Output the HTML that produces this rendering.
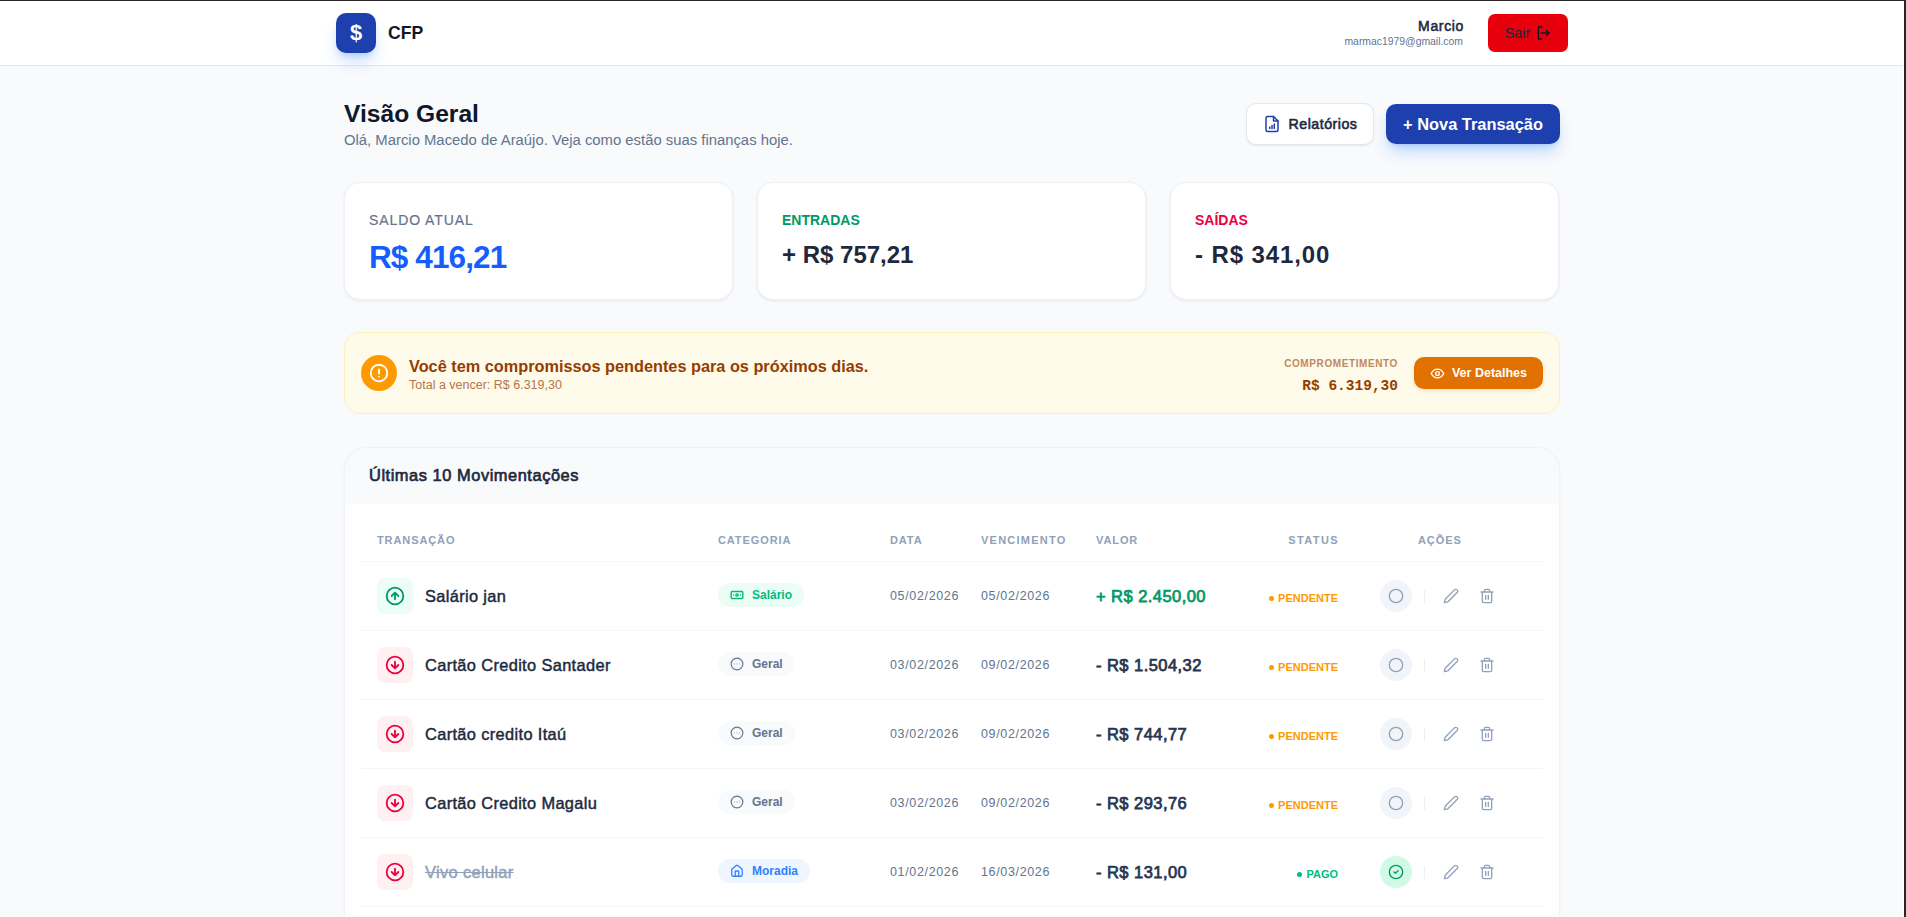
<!DOCTYPE html>
<html lang="pt-BR">
<head>
<meta charset="utf-8">
<title>CFP</title>
<style>
*{box-sizing:border-box;margin:0;padding:0}
html,body{width:1906px;height:917px;overflow:hidden}
body{font-family:"Liberation Sans",sans-serif;background:#f8fafc;position:relative;color:#0f172a}
.abs{position:absolute}
#topline{left:0;top:0;width:1906px;height:1px;background:#2b2424;z-index:10}
#rightline{left:1904px;top:0;width:2px;height:917px;background:#262626;z-index:10}
#whitecol{left:1903px;top:0;width:1px;height:917px;background:#fff;z-index:9}
header{position:absolute;left:0;top:0;width:1906px;height:66px;background:#fff;border-bottom:1px solid #e2e8f0}
.logo{left:336px;top:13px;width:40px;height:40px;border-radius:10px;background:#1e40af;box-shadow:0 10px 15px -3px rgba(48,128,255,.3),0 4px 6px -4px rgba(48,128,255,.3);color:#fff;font-weight:700;font-size:22px;text-align:center;line-height:40px}
.brand{left:388px;top:23px;font-size:17.6px;font-weight:700;color:#0f172a}
.uname{right:442px;top:18px;font-size:14px;font-weight:400;letter-spacing:.65px;-webkit-text-stroke:.55px currentColor;color:#1d293d;text-align:right}
.uemail{right:443px;top:36px;font-size:10.4px;color:#62748e;text-align:right}
.sair{left:1488px;top:14px;width:80px;height:38px;border-radius:7px;background:#e7000b;color:#1d293d;font-size:14.3px;display:flex;align-items:center;justify-content:center;gap:5px;padding-left:0px;-webkit-text-stroke:.2px currentColor}
h1{position:absolute;left:344px;top:100px;font-size:24.6px;font-weight:700;color:#0f172a}
.sub{left:344px;top:132px;font-size:14.85px;color:#62748e}
.btn-rel{left:1246px;top:103px;width:128px;height:42px;padding-left:0px;padding-bottom:1px;border-radius:10px;background:#fff;border:1px solid #e2e8f0;box-shadow:0 1px 2px rgba(0,0,0,.08);display:flex;align-items:center;justify-content:center;gap:8px;font-size:14.2px;font-weight:400;letter-spacing:.5px;-webkit-text-stroke:.6px currentColor;color:#1d293d}
.btn-nova{left:1386px;top:104px;width:174px;height:40px;border-radius:10px;background:#1e40af;box-shadow:0 10px 15px -3px rgba(48,128,255,.3),0 4px 6px -4px rgba(48,128,255,.3);color:#fff;font-size:16.4px;padding-top:1px;font-weight:700;display:flex;align-items:center;justify-content:center}
.card{top:182px;width:389px;height:118px;background:#fff;border-radius:16px;border:1px solid #eef2f6;box-shadow:0 1px 3px rgba(15,23,42,.08)}
.card .lbl{position:absolute;left:24px;top:29px;font-size:14px;letter-spacing:.9px}
.card .val{position:absolute;left:24px;top:58px;font-size:24px;font-weight:700;color:#1d293d}
.card .val.big{top:56px;font-size:31.5px;letter-spacing:-.9px}
.alert{left:344px;top:332px;width:1216px;height:82px;background:#fefbea;border:1px solid #fdf0b8;border-radius:16px}

.al-icon{left:361px;top:355px;width:36px;height:36px;border-radius:50%;background:#fe9a00;display:flex;align-items:center;justify-content:center}
.al-title{left:409px;top:357px;font-size:16.3px;font-weight:700;color:#973c00;white-space:nowrap}
.al-sub{left:409px;top:378px;font-size:12.5px;color:#b67546;white-space:nowrap}
.al-lbl{right:508px;top:358px;font-size:10px;font-weight:700;letter-spacing:.6px;color:#c1885e;text-align:right}
.al-val{right:508px;top:378px;font-family:"Liberation Mono",monospace;font-size:14.5px;font-weight:700;color:#973c00;text-align:right}
.al-btn{left:1414px;top:357px;width:129px;height:32px;border-radius:10px;background:#e17100;box-shadow:0 2px 4px rgba(180,83,9,.15);color:#fff;font-size:12.5px;font-weight:700;display:flex;align-items:center;justify-content:center;gap:7px;padding-left:0px}
.tcard{left:344px;top:447px;width:1216px;height:520px;background:#fff;border:1px solid #eef2f6;border-radius:24px;overflow:hidden;box-shadow:0 1px 3px rgba(15,23,42,.05)}
.thead{position:absolute;left:0;top:0;width:100%;height:56px;background:#f9fafc}
.ttitle{position:absolute;left:24px;top:18px;font-size:16.4px;font-weight:400;letter-spacing:.55px;-webkit-text-stroke:.65px currentColor;color:#1d293d}
.th{position:absolute;top:86px;font-size:11px;font-weight:700;letter-spacing:.9px;color:#90a1b9}
.row{position:absolute;left:16px;width:1182px;height:69px;border-top:1px solid #f3f6f9}
.ibox{position:absolute;left:16px;top:16px;width:36px;height:36px;border-radius:8px;display:flex;align-items:center;justify-content:center}
.ibox.up{background:#ecfdf5}
.ibox.down{background:#fff1f2}
.nm{position:absolute;left:64px;top:25px;font-size:16.4px;font-weight:400;letter-spacing:.35px;-webkit-text-stroke:.45px currentColor;color:#1d293d;white-space:nowrap}
.pill{position:absolute;left:357px;top:21px;height:24px;border-radius:12px;display:flex;align-items:center;padding:0 12px 0 12px;gap:8px;font-size:12px;font-weight:700;white-space:nowrap}
.dt{position:absolute;top:27px;font-size:12.5px;letter-spacing:.65px;color:#62748e}
.vl{position:absolute;left:735px;top:25px;font-size:16.5px;font-weight:400;letter-spacing:.45px;-webkit-text-stroke:.75px currentColor;white-space:nowrap}
.st{position:absolute;right:205px;top:30px;font-size:11px;font-weight:700;white-space:nowrap;text-align:right}
.st i{display:inline-block;width:5px;height:5px;border-radius:50%;margin-right:4px;vertical-align:middle;position:relative;top:-1px}
.chk{position:absolute;left:1019px;top:18px;width:32px;height:32px;border-radius:50%;display:flex;align-items:center;justify-content:center}
.sep{position:absolute;left:1063px;top:28px;width:1px;height:13px;background:#eceff4}
.ed{position:absolute;left:1082px;top:26px}
.tr{position:absolute;left:1118px;top:26px}
</style>
</head>
<body>
<div id="topline" class="abs"></div>
<div id="whitecol" class="abs"></div>
<div id="rightline" class="abs"></div>
<header>
  <div class="abs logo">$</div>
  <div class="abs brand">CFP</div>
  <div class="abs uname">Marcio</div>
  <div class="abs uemail">marmac1979@gmail.com</div>
  <div class="abs sair">Sair <svg width="16" height="16" viewBox="0 0 24 24" fill="none" stroke="#0f172a" stroke-width="2.2" stroke-linecap="round" stroke-linejoin="round"><path d="M10 3H6a1 1 0 0 0-1 1v16a1 1 0 0 0 1 1h4"/><path d="M9 12h12"/><path d="M17 8l4 4-4 4"/></svg></div>
</header>

<h1>Visão Geral</h1>
<div class="abs sub">Olá, Marcio Macedo de Araújo. Veja como estão suas finanças hoje.</div>
<div class="abs btn-rel"><svg width="18" height="18" viewBox="0 0 24 24" fill="none" stroke="#1e40af" stroke-width="2" stroke-linecap="round" stroke-linejoin="round"><path d="M14 2H6a2 2 0 0 0-2 2v16a2 2 0 0 0 2 2h12a2 2 0 0 0 2-2V8z"/><path d="M14 2v6h6"/><path d="M9 18v-2M12 18v-4M15 18v-6"/></svg>Relatórios</div>
<div class="abs btn-nova">+ Nova Transação</div>

<div class="abs card" style="left:344px"><div class="lbl" style="color:#62748e;-webkit-text-stroke:.2px currentColor">SALDO ATUAL</div><div class="val big" style="color:#155dfc">R$ 416,21</div></div>
<div class="abs card" style="left:757px"><div class="lbl" style="color:#009966;font-weight:700;letter-spacing:0">ENTRADAS</div><div class="val">+ R$ 757,21</div></div>
<div class="abs card" style="left:1170px"><div class="lbl" style="color:#ec003f;font-weight:700;letter-spacing:0">SAÍDAS</div><div class="val" style="letter-spacing:.9px">- R$ 341,00</div></div>

<div class="abs alert"></div>
<div class="abs al-icon"><svg width="22" height="22" viewBox="0 0 24 24" fill="none" stroke="#fff" stroke-width="2" stroke-linecap="round"><circle cx="12" cy="12" r="9"/><path d="M12 8v4.5M12 16h.01"/></svg></div>
<div class="abs al-title">Você tem compromissos pendentes para os próximos dias.</div>
<div class="abs al-sub">Total a vencer: R$ 6.319,30</div>
<div class="abs al-lbl">COMPROMETIMENTO</div>
<div class="abs al-val">R$ 6.319,30</div>
<div class="abs al-btn"><svg width="15" height="15" viewBox="0 0 24 24" fill="none" stroke="#fff" stroke-width="2.2" stroke-linecap="round" stroke-linejoin="round"><path d="M2 12s3.6-7 10-7 10 7 10 7-3.6 7-10 7S2 12 2 12z"/><circle cx="12" cy="12" r="3"/></svg>Ver Detalhes</div>

<div class="abs tcard">
<div class="thead"><div class="ttitle">Últimas 10 Movimentações</div></div>
<div class="th" style="left:32px">TRANSAÇÃO</div>
<div class="th" style="left:373px">CATEGORIA</div>
<div class="th" style="left:545px">DATA</div>
<div class="th" style="left:636px;letter-spacing:1.25px">VENCIMENTO</div>
<div class="th" style="left:751px">VALOR</div>
<div class="th" style="right:220px;letter-spacing:1.4px">STATUS</div>
<div class="th" style="left:1073px">AÇÕES</div>
<div class="row" style="top:113px"><div class="ibox up"><svg width="20" height="20" viewBox="0 0 24 24" fill="none" stroke="#009966" stroke-width="2.2" stroke-linecap="round" stroke-linejoin="round"><circle cx="12" cy="12" r="10"/><path d="M16 12l-4-4-4 4M12 16V8"/></svg></div><div class="nm" style="">Salário jan</div><div class="pill" style="background:#ecfdf5;color:#00bc7d"><svg width="14" height="14" viewBox="0 0 24 24" fill="none" stroke="#00bc7d" stroke-width="2.4" stroke-linecap="round" stroke-linejoin="round"><rect x="2" y="6" width="20" height="12" rx="2"/><circle cx="12" cy="12" r="2"/><path d="M6 12h.01M18 12h.01"/></svg>Salário</div><div class="dt" style="left:529px">05/02/2026</div><div class="dt" style="left:620px">05/02/2026</div><div class="vl" style="color:#009966">+ R$ 2.450,00</div><div class="st" style="color:#fe9a00"><i style="background:#fe9a00"></i>PENDENTE</div><div class="chk" style="background:#f1f5f9"><svg width="16" height="16" viewBox="0 0 24 24" fill="none" stroke="#90a1b9" stroke-width="2"><circle cx="12" cy="12" r="10"/></svg></div><div class="sep"></div><div class="ed"><svg width="16" height="16" viewBox="0 0 24 24" fill="none" stroke="#90a1b9" stroke-width="2" stroke-linecap="round" stroke-linejoin="round"><path d="M21.174 6.812a1 1 0 0 0-3.986-3.987L3.842 16.174a2 2 0 0 0-.5.83l-1.321 4.352a.5.5 0 0 0 .623.622l4.353-1.32a2 2 0 0 0 .83-.497z"/></svg></div><div class="tr"><svg width="16" height="16" viewBox="0 0 24 24" fill="none" stroke="#90a1b9" stroke-width="2" stroke-linecap="round" stroke-linejoin="round"><path d="M3 6h18M19 6v14a2 2 0 0 1-2 2H7a2 2 0 0 1-2-2V6M8 6V4a2 2 0 0 1 2-2h4a2 2 0 0 1 2 2v2M10 11v6M14 11v6"/></svg></div></div>
<div class="row" style="top:182px"><div class="ibox down"><svg width="20" height="20" viewBox="0 0 24 24" fill="none" stroke="#ec003f" stroke-width="2.2" stroke-linecap="round" stroke-linejoin="round"><circle cx="12" cy="12" r="10"/><path d="M8 12l4 4 4-4M12 8v8"/></svg></div><div class="nm" style="">Cartão Credito Santader</div><div class="pill" style="background:#f8fafc;color:#62748e"><svg width="14" height="14" viewBox="0 0 24 24" fill="none" stroke="#62748e" stroke-width="2" stroke-linecap="round" stroke-linejoin="round"><circle cx="12" cy="12" r="10"/><path d="M16.5 12h.01M12 12h.01M7.5 12h.01" stroke="#b8c4d4" stroke-width="2.6"/></svg>Geral</div><div class="dt" style="left:529px">03/02/2026</div><div class="dt" style="left:620px">09/02/2026</div><div class="vl" style="color:#293650">- R$ 1.504,32</div><div class="st" style="color:#fe9a00"><i style="background:#fe9a00"></i>PENDENTE</div><div class="chk" style="background:#f1f5f9"><svg width="16" height="16" viewBox="0 0 24 24" fill="none" stroke="#90a1b9" stroke-width="2"><circle cx="12" cy="12" r="10"/></svg></div><div class="sep"></div><div class="ed"><svg width="16" height="16" viewBox="0 0 24 24" fill="none" stroke="#90a1b9" stroke-width="2" stroke-linecap="round" stroke-linejoin="round"><path d="M21.174 6.812a1 1 0 0 0-3.986-3.987L3.842 16.174a2 2 0 0 0-.5.83l-1.321 4.352a.5.5 0 0 0 .623.622l4.353-1.32a2 2 0 0 0 .83-.497z"/></svg></div><div class="tr"><svg width="16" height="16" viewBox="0 0 24 24" fill="none" stroke="#90a1b9" stroke-width="2" stroke-linecap="round" stroke-linejoin="round"><path d="M3 6h18M19 6v14a2 2 0 0 1-2 2H7a2 2 0 0 1-2-2V6M8 6V4a2 2 0 0 1 2-2h4a2 2 0 0 1 2 2v2M10 11v6M14 11v6"/></svg></div></div>
<div class="row" style="top:251px"><div class="ibox down"><svg width="20" height="20" viewBox="0 0 24 24" fill="none" stroke="#ec003f" stroke-width="2.2" stroke-linecap="round" stroke-linejoin="round"><circle cx="12" cy="12" r="10"/><path d="M8 12l4 4 4-4M12 8v8"/></svg></div><div class="nm" style="">Cartão credito Itaú</div><div class="pill" style="background:#f8fafc;color:#62748e"><svg width="14" height="14" viewBox="0 0 24 24" fill="none" stroke="#62748e" stroke-width="2" stroke-linecap="round" stroke-linejoin="round"><circle cx="12" cy="12" r="10"/><path d="M16.5 12h.01M12 12h.01M7.5 12h.01" stroke="#b8c4d4" stroke-width="2.6"/></svg>Geral</div><div class="dt" style="left:529px">03/02/2026</div><div class="dt" style="left:620px">09/02/2026</div><div class="vl" style="color:#293650">- R$ 744,77</div><div class="st" style="color:#fe9a00"><i style="background:#fe9a00"></i>PENDENTE</div><div class="chk" style="background:#f1f5f9"><svg width="16" height="16" viewBox="0 0 24 24" fill="none" stroke="#90a1b9" stroke-width="2"><circle cx="12" cy="12" r="10"/></svg></div><div class="sep"></div><div class="ed"><svg width="16" height="16" viewBox="0 0 24 24" fill="none" stroke="#90a1b9" stroke-width="2" stroke-linecap="round" stroke-linejoin="round"><path d="M21.174 6.812a1 1 0 0 0-3.986-3.987L3.842 16.174a2 2 0 0 0-.5.83l-1.321 4.352a.5.5 0 0 0 .623.622l4.353-1.32a2 2 0 0 0 .83-.497z"/></svg></div><div class="tr"><svg width="16" height="16" viewBox="0 0 24 24" fill="none" stroke="#90a1b9" stroke-width="2" stroke-linecap="round" stroke-linejoin="round"><path d="M3 6h18M19 6v14a2 2 0 0 1-2 2H7a2 2 0 0 1-2-2V6M8 6V4a2 2 0 0 1 2-2h4a2 2 0 0 1 2 2v2M10 11v6M14 11v6"/></svg></div></div>
<div class="row" style="top:320px"><div class="ibox down"><svg width="20" height="20" viewBox="0 0 24 24" fill="none" stroke="#ec003f" stroke-width="2.2" stroke-linecap="round" stroke-linejoin="round"><circle cx="12" cy="12" r="10"/><path d="M8 12l4 4 4-4M12 8v8"/></svg></div><div class="nm" style="">Cartão Credito Magalu</div><div class="pill" style="background:#f8fafc;color:#62748e"><svg width="14" height="14" viewBox="0 0 24 24" fill="none" stroke="#62748e" stroke-width="2" stroke-linecap="round" stroke-linejoin="round"><circle cx="12" cy="12" r="10"/><path d="M16.5 12h.01M12 12h.01M7.5 12h.01" stroke="#b8c4d4" stroke-width="2.6"/></svg>Geral</div><div class="dt" style="left:529px">03/02/2026</div><div class="dt" style="left:620px">09/02/2026</div><div class="vl" style="color:#293650">- R$ 293,76</div><div class="st" style="color:#fe9a00"><i style="background:#fe9a00"></i>PENDENTE</div><div class="chk" style="background:#f1f5f9"><svg width="16" height="16" viewBox="0 0 24 24" fill="none" stroke="#90a1b9" stroke-width="2"><circle cx="12" cy="12" r="10"/></svg></div><div class="sep"></div><div class="ed"><svg width="16" height="16" viewBox="0 0 24 24" fill="none" stroke="#90a1b9" stroke-width="2" stroke-linecap="round" stroke-linejoin="round"><path d="M21.174 6.812a1 1 0 0 0-3.986-3.987L3.842 16.174a2 2 0 0 0-.5.83l-1.321 4.352a.5.5 0 0 0 .623.622l4.353-1.32a2 2 0 0 0 .83-.497z"/></svg></div><div class="tr"><svg width="16" height="16" viewBox="0 0 24 24" fill="none" stroke="#90a1b9" stroke-width="2" stroke-linecap="round" stroke-linejoin="round"><path d="M3 6h18M19 6v14a2 2 0 0 1-2 2H7a2 2 0 0 1-2-2V6M8 6V4a2 2 0 0 1 2-2h4a2 2 0 0 1 2 2v2M10 11v6M14 11v6"/></svg></div></div>
<div class="row" style="top:389px"><div class="ibox down"><svg width="20" height="20" viewBox="0 0 24 24" fill="none" stroke="#ec003f" stroke-width="2.2" stroke-linecap="round" stroke-linejoin="round"><circle cx="12" cy="12" r="10"/><path d="M8 12l4 4 4-4M12 8v8"/></svg></div><div class="nm" style="color:#90a1b9;text-decoration:line-through">Vivo celular</div><div class="pill" style="background:#eff6ff;color:#3080ff"><svg width="14" height="14" viewBox="0 0 24 24" fill="none" stroke="#3080ff" stroke-width="2.2" stroke-linecap="round" stroke-linejoin="round"><path d="M15 21v-8a1 1 0 0 0-1-1h-4a1 1 0 0 0-1 1v8"/><path d="M3 10a2 2 0 0 1 .709-1.528l7-5.999a2 2 0 0 1 2.582 0l7 5.999A2 2 0 0 1 21 10v9a2 2 0 0 1-2 2H5a2 2 0 0 1-2-2z"/></svg>Moradia</div><div class="dt" style="left:529px">01/02/2026</div><div class="dt" style="left:620px">16/03/2026</div><div class="vl" style="color:#293650">- R$ 131,00</div><div class="st" style="color:#00bc7d"><i style="background:#00bc7d"></i>PAGO</div><div class="chk" style="background:#d0fae5"><svg width="16" height="16" viewBox="0 0 24 24" fill="none" stroke="#009966" stroke-width="2" stroke-linecap="round" stroke-linejoin="round"><circle cx="12" cy="12" r="10"/><path d="M9 12l2 2 4-4"/></svg></div><div class="sep"></div><div class="ed"><svg width="16" height="16" viewBox="0 0 24 24" fill="none" stroke="#90a1b9" stroke-width="2" stroke-linecap="round" stroke-linejoin="round"><path d="M21.174 6.812a1 1 0 0 0-3.986-3.987L3.842 16.174a2 2 0 0 0-.5.83l-1.321 4.352a.5.5 0 0 0 .623.622l4.353-1.32a2 2 0 0 0 .83-.497z"/></svg></div><div class="tr"><svg width="16" height="16" viewBox="0 0 24 24" fill="none" stroke="#90a1b9" stroke-width="2" stroke-linecap="round" stroke-linejoin="round"><path d="M3 6h18M19 6v14a2 2 0 0 1-2 2H7a2 2 0 0 1-2-2V6M8 6V4a2 2 0 0 1 2-2h4a2 2 0 0 1 2 2v2M10 11v6M14 11v6"/></svg></div></div>
<div class="row" style="top:458px"></div>
</div>
</body>
</html>
